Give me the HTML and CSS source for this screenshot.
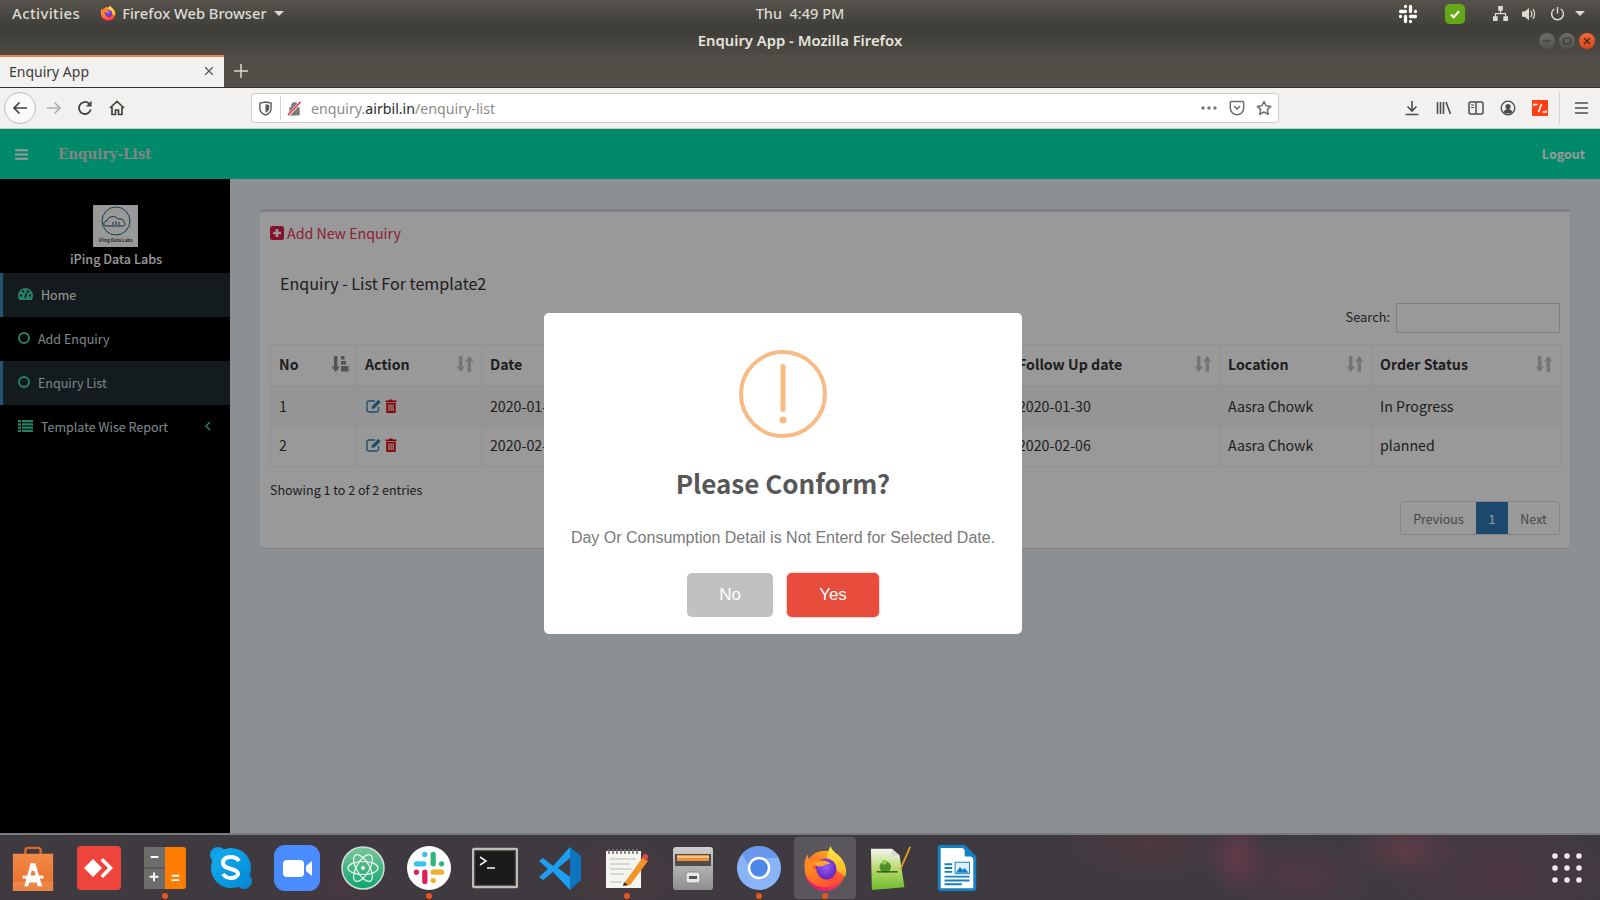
FILE: index.html
```html
<!DOCTYPE html>
<html lang="en">
<head>
<meta charset="utf-8">
<title>Enquiry App - Mozilla Firefox</title>
<link rel="stylesheet" href="styles.css">
</head>
<body>
<div class="screen">
  <svg class="defs" width="0" height="0" aria-hidden="true">
    <defs>
      <linearGradient id="ffBody" x1="0.7" y1="0" x2="0.35" y2="1"><stop offset="0" stop-color="#ffb21f"/><stop offset="0.5" stop-color="#ff5a2c"/><stop offset="1" stop-color="#e8157c"/></linearGradient>
      <linearGradient id="ffFlame" x1="0.5" y1="0" x2="0.5" y2="1"><stop offset="0" stop-color="#ffe94a"/><stop offset="1" stop-color="#ffb01f"/></linearGradient>
      <radialGradient id="ffGlobe" cx="0.5" cy="0.4" r="0.65"><stop offset="0" stop-color="#9a5cff"/><stop offset="1" stop-color="#5a1fb0"/></radialGradient>
      <linearGradient id="ffFox" x1="0" y1="0" x2="0.8" y2="1"><stop offset="0" stop-color="#ff9a1f"/><stop offset="1" stop-color="#ff4a30"/></linearGradient>
      <linearGradient id="bag" x1="0" y1="0" x2="0" y2="1"><stop offset="0" stop-color="#f28a45"/><stop offset="1" stop-color="#e96d2b"/></linearGradient>
      <linearGradient id="skypeG" x1="0" y1="0" x2="1" y2="1"><stop offset="0" stop-color="#16aef0"/><stop offset="1" stop-color="#0089d6"/></linearGradient>
      <linearGradient id="atomG" x1="0" y1="0" x2="0" y2="1"><stop offset="0" stop-color="#7cc79c"/><stop offset="1" stop-color="#0ea56d"/></linearGradient>
      <linearGradient id="cabinet" x1="0" y1="0" x2="0" y2="1"><stop offset="0" stop-color="#cfcfcf"/><stop offset="1" stop-color="#8e8e8e"/></linearGradient>
      <linearGradient id="grass" x1="0" y1="0" x2="0" y2="1"><stop offset="0" stop-color="#f4f4f0"/><stop offset="0.5" stop-color="#b7d96a"/><stop offset="1" stop-color="#6fbb2d"/></linearGradient>
      <symbol id="firefox" viewBox="0 0 48 48">
        <circle cx="24" cy="27" r="21" fill="url(#ffBody)"/>
        <path d="M30 1c1 6 8 8 12 14 4 6 5 13 3 18L26 18c0-7 1-12 4-17z" fill="url(#ffFlame)"/>
        <path d="M6 10c0 4 2 6 4 7 3-3 6-4 8-4L8 28l-5-1C2 20 3 14 6 10z" fill="#ff8a24"/>
        <circle cx="25" cy="25" r="11" fill="url(#ffGlobe)"/>
        <path d="M3 27c2 10 10 17 21 17 9 0 16-5 20-13-4 5-11 7-17 6-7-1-12-6-12-12-3 0-6-1-7-3 4-3 10-2 14-3-4-1-8-1-11 0-3 2-6 4-8 8z" fill="url(#ffFox)"/>
        <path d="M13 20c4-5 12-5 17 0-3-1-6 1-9 2-3 1-6 0-8-2z" fill="#ffa52a"/>
      </symbol>
      <symbol id="sort" viewBox="0 0 18 18">
        <path d="M3 1h3.400v10.500H9L4.700 17 .5 11.500h2.500zM13.300 1l4.200 5.500H15V17h-3.400V6.500H9z"/>
      </symbol>
      <symbol id="sortNum" viewBox="0 0 18 18">
        <path d="M3 1h3.400v10.500H9L4.700 17 .5 11.500h2.500zM10 1h3.500v3.500H10zM10 6h5v3.500h-5zM10 11h7.500v5.500H10z"/>
      </symbol>
      <symbol id="edit" viewBox="0 0 16 14">
        <path d="M12.500 8v3.200a1.800 1.800 0 0 1-1.800 1.800H2.800A1.800 1.800 0 0 1 1 11.200V3.800A1.800 1.800 0 0 1 2.800 2H9" fill="none" stroke="#2f7fb5" stroke-width="1.300"/>
        <path d="M6 7.200 12.300.8l2.400 2.400L8.400 9.600 5.500 10z" fill="#2f7fb5"/>
      </symbol>
      <symbol id="trash" viewBox="0 0 12 14">
        <path d="M4 1.500 4.700.4h2.600L8 1.500h3.500V3H.5V1.500zM1.300 3.800h9.400V13a1 1 0 0 1-1 1H2.300a1 1 0 0 1-1-1zM3.300 5.300v7h1.200v-7zM5.400 5.300v7h1.200v-7zM7.500 5.300v7h1.200v-7z" fill="#e10000" fill-rule="evenodd"/>
      </symbol>
    </defs>
  </svg>

  <header class="topbar">
    <div class="top-left">
      <span class="top-label top-activities">Activities</span>
      <span class="top-app">
        <svg class="ic16"><use href="#firefox"/></svg>
        <span class="top-label">Firefox Web Browser</span>
        <i class="caret"></i>
      </span>
    </div>
    <div class="top-clock">Thu&nbsp; 4:49 PM</div>
    <div class="top-right">
      <svg class="tray tray-slack" viewBox="0 0 20 20"><g stroke="#fff" stroke-width="3.300" stroke-linecap="round"><path d="M7.500 2.500v0M2.500 7.500h5M12.500 2.500v5M17.500 7.500v0M17.500 12.500h-5M12.500 17.500v0M7.500 17.500v-5M2.500 12.500v0"/></g></svg>
      <svg class="tray tray-check" viewBox="0 0 24 24"><path d="M7 1h10c4 0 6 2 6 6v10c0 4-2 6-6 6H7c-4 0-6-2-6-6V7c0-4 2-6 6-6z" fill="#62a915"/><path d="M7.500 12.500l3 3 6-6.500" fill="none" stroke="#fff" stroke-width="2.400"/></svg>
      <svg class="tray tray-net" viewBox="0 0 16 16"><path d="M5.500 0h5v5h-5zM0 11h5v5H0zM11 11h5v5h-5zM7.400 5h1.200v2.500H14V11h-1.200V8.700H3.200V11H2V7.500h5.400z" fill="#dedbd2"/></svg>
      <svg class="tray tray-vol" viewBox="0 0 18 16"><path d="M1 5h3l5-4v14l-5-4H1z" fill="#dedbd2"/><path d="M11 4.500c1.500 2 1.500 5 0 7M13.500 2.500c2.500 3 2.500 8 0 11" fill="none" stroke="#dedbd2" stroke-width="1.400"/></svg>
      <svg class="tray tray-pow" viewBox="0 0 16 16"><path d="M8 1v7" stroke="#dedbd2" stroke-width="1.500"/><path d="M4.500 3.200a6.300 6.300 0 1 0 7 0" fill="none" stroke="#dedbd2" stroke-width="1.500"/></svg>
      <i class="caret"></i>
    </div>
  </header>

  <div class="titlebar">
    <span class="title-text">Enquiry App - Mozilla Firefox</span>
    <div class="winbtns">
      <span class="winbtn"><svg viewBox="0 0 16 16" class="ic16"><path d="M4 8h8" stroke="#2f2f2c" stroke-width="1"/></svg></span>
      <span class="winbtn"><svg viewBox="0 0 16 16" class="ic16"><rect x="4.500" y="5" width="7" height="6" rx="1" fill="none" stroke="#2f2f2c"/></svg></span>
      <span class="winbtn winbtn-close"><svg viewBox="0 0 16 16" class="ic16"><path d="M5 5l6 6M11 5l-6 6" stroke="#3a2015" stroke-width="1.100"/></svg></span>
    </div>
  </div>

  <div class="tabrow">
    <div class="tab">
      <span class="tab-title">Enquiry App</span>
      <svg class="tab-x" viewBox="0 0 12 12"><path d="M1.500 1.500l9 9M10.500 1.500l-9 9" stroke="#55534e" stroke-width="1.400"/></svg>
    </div>
    <svg class="tab-new" viewBox="0 0 14 14"><path d="M7 0v14M0 7h14" stroke="#dcdad4" stroke-width="1.500"/></svg>
  </div>

  <div class="toolbar">
    <div class="nav">
      <span class="navbtn navbtn-back"><svg viewBox="0 0 16 16" class="ic16"><path d="M15 8H2M7.500 2.500 2 8l5.500 5.500" fill="none" stroke="#45433f" stroke-width="1.700"/></svg></span>
      <span class="navbtn navbtn-fwd"><svg viewBox="0 0 16 16" class="ic16"><path d="M1 8h13M8.500 2.500 14 8l-5.500 5.500" fill="none" stroke="#b0afab" stroke-width="1.700"/></svg></span>
      <span class="navbtn navbtn-reload"><svg viewBox="0 0 16 16" class="ic16"><path d="M13.800 9.500A6 6 0 1 1 12 3.500" fill="none" stroke="#45433f" stroke-width="1.800"/><path d="M14.500.8v5.700H8.800z" fill="#45433f"/></svg></span>
      <span class="navbtn"><svg viewBox="0 0 16 16" class="ic16"><path d="M1 8 8 1.500 15 8M3 7v7.500h3.500V10h3v4.500H13V7" fill="none" stroke="#45433f" stroke-width="1.700"/></svg></span>
    </div>
    <div class="urlbar">
      <svg class="url-shield" viewBox="0 0 14 16"><path d="M1 2.200 7 1l6 1.200V8c0 3.500-3 6-6 7-3-1-6-3.500-6-7z" fill="none" stroke="#5a5a58" stroke-width="1.500"/><path d="M7 3.500 11 4.300V8c0 2-2 3.800-4 4.600z" fill="#5a5a58"/></svg>
      <span class="url-sep"></span>
      <svg class="url-lock" viewBox="0 0 16 16"><path d="M3 7h10v8H3zM5 7V4.500a3 3 0 0 1 6 0V7" fill="#7b7b78" stroke="#7b7b78"/><path d="M1 15.500 14.500 1" stroke="#f2f2f0" stroke-width="3"/><path d="M1 15 14.500 1" stroke="#ee2a4f" stroke-width="1.500"/></svg>
      <span class="url-text">enquiry.<b class="url-domain">airbil.in</b>/enquiry-list</span>
      <span class="url-actions">
        <svg class="url-dots" viewBox="0 0 16 4"><circle cx="2" cy="2" r="1.700"/><circle cx="8" cy="2" r="1.700"/><circle cx="14" cy="2" r="1.700"/></svg>
        <svg class="url-ic" viewBox="0 0 16 16"><path d="M2.500 1.500h11a1.200 1.200 0 0 1 1.200 1.200V8a6.700 6.700 0 0 1-13.400 0V2.700a1.200 1.200 0 0 1 1.200-1.200z" fill="none" stroke="#6e6e6c" stroke-width="1.500"/><path d="M5 6l3 3 3-3" fill="none" stroke="#6e6e6c" stroke-width="1.600"/></svg>
        <svg class="url-ic" viewBox="0 0 16 16"><path d="M8 1.500l2 4.300 4.700.6-3.400 3.200.9 4.700L8 12l-4.200 2.300.9-4.700L1.300 6.400 6 5.800z" fill="none" stroke="#6e6e6c" stroke-width="1.500" stroke-linejoin="round"/></svg>
      </span>
    </div>
    <div class="tools">
      <span class="toolbtn"><svg viewBox="0 0 16 16" class="ic16"><path d="M8 1v9.500M3.500 6.500 8 11l4.500-4.500M1.500 14.500h13" fill="none" stroke="#4d4c48" stroke-width="1.600"/></svg></span>
      <span class="toolbtn"><svg viewBox="0 0 16 16" class="ic16"><path d="M1.500 2v12M4.500 2v12M7.500 2v12M10 2l4.500 12" fill="none" stroke="#4d4c48" stroke-width="1.600"/></svg></span>
      <span class="toolbtn"><svg viewBox="0 0 16 16" class="ic16"><rect x="1" y="2" width="14" height="12" rx="2" fill="none" stroke="#4d4c48" stroke-width="1.500"/><path d="M8 2.500v11" stroke="#4d4c48" stroke-width="1.500"/><path d="M3 5h3M3 7.500h3" stroke="#4d4c48"/></svg></span>
      <span class="toolbtn"><svg viewBox="0 0 16 16" class="ic16"><circle cx="8" cy="8" r="6.800" fill="none" stroke="#4d4c48" stroke-width="1.300"/><circle cx="8" cy="6.500" r="2.600" fill="#4d4c48"/><path d="M3.500 12c1-2 2.500-3 4.500-3s3.500 1 4.500 3c-2.500 2-6.500 2-9 0z" fill="#4d4c48"/></svg></span>
      <span class="toolbtn"><svg viewBox="0 0 16 16" class="ic16"><rect width="16" height="16" fill="#ff3f14"/><path d="M2 6V4.500h3.500M10.500 12h3.500V10.500M9.500 4 6.500 12" fill="none" stroke="#fff" stroke-width="1.600"/></svg></span>
      <span class="tool-sep"></span>
      <span class="toolbtn toolbtn-menu"><svg viewBox="0 0 16 16" class="ic16"><path d="M1 3h13M1 8h13M1 13h13" stroke="#4d4c48" stroke-width="1.600"/></svg></span>
    </div>
  </div>

  <div class="app">
    <div class="app-header">
      <svg class="burger" viewBox="0 0 13 11"><path d="M0 1.200h13M0 5.500h13M0 9.800h13" stroke="#fff" stroke-width="2"/></svg>
      <span class="app-title">Enquiry-List</span>
      <span class="logout">Logout</span>
    </div>
    <div class="app-body">
      <aside class="sidebar">
        <div class="brand">
          <svg class="brand-logo" viewBox="0 0 45 42">
            <rect width="45" height="42" fill="#fff"/>
            <circle cx="23" cy="16" r="14" fill="none" stroke="#1c6e7d" stroke-width="1"/>
            <path d="M13 21c-3 0-3-5 1-5 1-5 8-6 11-2 4-1 7 2 6 4 2 1 1 3-1 3z" fill="none" stroke="#26495c" stroke-width="1"/>
            <path d="M20 20v-3M23 20v-4M26 20v-3" stroke="#26495c" stroke-width="1"/>
            <text x="22.500" y="37" class="logo-text">iPing Data Labs</text>
          </svg>
          <div class="brand-name">iPing Data Labs</div>
        </div>
        <ul class="menu">
          <li class="menu-item is-active"><svg class="menu-ic" viewBox="0 0 15 12"><path d="M7.500 0a7.500 7.500 0 0 0-7.500 7.500c0 1.500.5 3 1.200 4.500h12.600c.7-1.500 1.200-3 1.200-4.500A7.500 7.500 0 0 0 7.500 0z" fill="#3fd9a6"/><circle cx="3" cy="7.500" r="1.200" fill="#222d32"/><circle cx="5" cy="3.500" r="1.200" fill="#222d32"/><circle cx="10" cy="3.500" r="1.200" fill="#222d32"/><circle cx="12" cy="7.500" r="1.200" fill="#222d32"/><path d="M7 10l1.500-5" stroke="#222d32" stroke-width="1.500"/></svg><span>Home</span></li>
          <li class="menu-item menu-sub"><i class="ring"></i><span>Add Enquiry</span></li>
          <li class="menu-item menu-sub is-active"><i class="ring"></i><span>Enquiry List</span></li>
          <li class="menu-item"><svg class="menu-ic" viewBox="0 0 15 12"><path d="M0 0h3v2.300H0zM4 0h11v2.300H4zM0 3.200h3v2.300H0zM4 3.200h11v2.300H4zM0 6.500h3v2.300H0zM4 6.500h11v2.300H4zM0 9.700h3V12H0zM4 9.700h11V12H4z" fill="#3fd9a6"/></svg><span>Template Wise Report</span><svg class="menu-chev" viewBox="0 0 6 10"><path d="M5 1 1 5l4 4" fill="none" stroke="#3fd9a6" stroke-width="1.500"/></svg></li>
        </ul>
      </aside>
      <main class="content">
        <section class="card">
          <a class="add-link"><svg class="add-ic" viewBox="0 0 14 14"><rect width="14" height="14" rx="2.500" fill="#dc1e46"/><path d="M7 3v8M3 7h8" stroke="#fff" stroke-width="2.600"/></svg>Add New Enquiry</a>
          <h2 class="card-title">Enquiry - List For template2</h2>
          <div class="search-row"><label class="search-label">Search:</label><span class="search-box"></span></div>
          <table class="grid">
            <colgroup><col class="c-no"><col class="c-action"><col class="c-date"><col class="c-hidden"><col class="c-follow"><col class="c-loc"><col class="c-status"></colgroup>
            <thead>
              <tr>
                <th>No<svg class="sort sort-on"><use href="#sortNum"/></svg></th>
                <th>Action<svg class="sort"><use href="#sort"/></svg></th>
                <th>Date<svg class="sort"><use href="#sort"/></svg></th>
                <th></th>
                <th>Follow Up date<svg class="sort"><use href="#sort"/></svg></th>
                <th>Location<svg class="sort"><use href="#sort"/></svg></th>
                <th>Order Status<svg class="sort"><use href="#sort"/></svg></th>
              </tr>
            </thead>
            <tbody>
              <tr class="odd"><td>1</td><td><svg class="act-edit"><use href="#edit"/></svg><svg class="act-trash"><use href="#trash"/></svg></td><td>2020-01-30</td><td></td><td>2020-01-30</td><td>Aasra Chowk</td><td>In Progress</td></tr>
              <tr class="even"><td>2</td><td><svg class="act-edit"><use href="#edit"/></svg><svg class="act-trash"><use href="#trash"/></svg></td><td>2020-02-06</td><td></td><td>2020-02-06</td><td>Aasra Chowk</td><td>planned</td></tr>
            </tbody>
          </table>
          <div class="table-foot">
            <div class="info">Showing 1 to 2 of 2 entries</div>
            <div class="pager"><span class="page">Previous</span><span class="page page-on">1</span><span class="page">Next</span></div>
          </div>
        </section>
      </main>
    </div>
    <div class="overlay">
      <div class="modal">
        <svg class="modal-icon" viewBox="0 0 88 88"><circle cx="44" cy="44" r="42" fill="none" stroke="#f8bb86" stroke-width="4"/><rect x="41.500" y="14" width="5" height="48" rx="2.500" fill="#f8bb86"/><circle cx="44" cy="70" r="3.600" fill="#f8bb86"/></svg>
        <h2 class="modal-title">Please Conform?</h2>
        <p class="modal-text">Day Or Consumption Detail is Not Enterd for Selected Date.</p>
        <div class="modal-btns"><button class="btn btn-no">No</button><button class="btn btn-yes">Yes</button></div>
      </div>
    </div>
  </div>

  <footer class="dock">
    <div class="dock-slot"><svg class="dock-ic dock-tall" viewBox="0 0 44 48"><path d="M14 12V6a3 3 0 0 1 3-3h10a3 3 0 0 1 3 3v6" fill="none" stroke="#d9692e" stroke-width="2.500"/><path d="M1 9h42v39H1z" fill="url(#bag)"/><path d="M1 38h42v10H1z" fill="#f09a5f" opacity=".5"/><path d="M19.500 19h5l7 24h-4.500l-1-4h-8l-1 4H13zM20.500 27l-1 5h5l-1-5z" fill="#fff" fill-rule="evenodd"/><path d="M11 32h22v3H11z" fill="#fff"/></svg></div>
    <div class="dock-slot"><svg class="dock-ic" viewBox="0 0 44 44"><rect width="44" height="44" rx="4" fill="#ef443b"/><path d="M16 13 25 22l-9 9-9-9z" fill="#fff"/><path d="M26 12l10 10-10 10-2.500-2.500L31 22l-7.500-7.500z" fill="#fff"/></svg></div>
    <div class="dock-slot dock-run"><svg class="dock-ic" viewBox="0 0 40 40"><rect x="1" y="1" width="38" height="38" rx="2" fill="#ff7d00"/><path d="M1 3a2 2 0 0 1 2-2h17v38H3a2 2 0 0 1-2-2z" fill="#6d6d6d"/><path d="M1 20h19" stroke="#4c4c4c"/><path d="M7 10h7M6 28h8M10 24v8M26 27h7M26 31h7" stroke="#fff" stroke-width="1.700"/></svg></div>
    <div class="dock-slot"><svg class="dock-ic" viewBox="0 0 44 44"><circle cx="9" cy="9" r="8" fill="#0d9ee3"/><circle cx="35" cy="35" r="8" fill="#0d87cf"/><circle cx="22" cy="22" r="20" fill="url(#skypeG)"/><path d="M30 15c-2-3-5-4-8-4-5 0-8 2-8 6 0 7 15 5 15 11 0 2-3 4-7 4-3 0-6-1-8-4" fill="none" stroke="#fff" stroke-width="4"/></svg></div>
    <div class="dock-slot"><svg class="dock-ic dock-tall" viewBox="0 0 46 46"><rect width="46" height="46" rx="11" fill="#4a8cff"/><rect x="9" y="15" width="21" height="17" rx="4" fill="#fff"/><path d="M32 21l6-5v15l-6-5z" fill="#fff"/></svg></div>
    <div class="dock-slot"><svg class="dock-ic" viewBox="0 0 44 44"><circle cx="22" cy="22" r="21" fill="url(#atomG)" stroke="#d4ded8" stroke-width="1.500"/><g fill="none" stroke="#eef7f1" stroke-width="1.200"><ellipse cx="22" cy="22" rx="15" ry="6.500"/><ellipse cx="22" cy="22" rx="15" ry="6.500" transform="rotate(60 22 22)"/><ellipse cx="22" cy="22" rx="15" ry="6.500" transform="rotate(120 22 22)"/></g><circle cx="22" cy="22" r="2" fill="#eef7f1"/></svg></div>
    <div class="dock-slot dock-run"><svg class="dock-ic" viewBox="0 0 42 42"><circle cx="21" cy="21" r="21" fill="#fff"/><g stroke-width="5" stroke-linecap="round" fill="none"><path d="M9 17h7M17 8v0" stroke="#36c5f0"/><path d="M25 8v9M33 17v0" stroke="#2eb67d"/><path d="M33 25h-8M25 33v0" stroke="#ecb22e"/><path d="M17 34v-9M9 25v0" stroke="#e01e5a"/></g></svg></div>
    <div class="dock-slot"><svg class="dock-ic dock-tall" viewBox="0 0 46 40"><rect x="1" y="1" width="44" height="38" rx="1" fill="#2a2a2a" stroke="#bdbdb8" stroke-width="2.500"/><rect x="4" y="4" width="38" height="32" fill="#1b1b1b"/><path d="M8 9l6 4-6 4" fill="none" stroke="#ececec" stroke-width="1.600"/><path d="M15 20h8" stroke="#ececec" stroke-width="1.600"/></svg></div>
    <div class="dock-slot"><svg class="dock-ic" viewBox="0 0 44 44"><path d="M31 1 42 10v24L31 44z" fill="#0e74bd"/><path d="M31 1 14 20 4 12 0 15l9 8-9 8 4 3 10-8 17 18V31L19 22 31 12z" fill="#1c9ff0"/></svg></div>
    <div class="dock-slot dock-run"><svg class="dock-ic" viewBox="0 0 44 44"><rect x="1" y="5" width="35" height="37" fill="#f5f5f0"/><path d="M4 3v5M8 3v5M12 3v5M16 3v5M20 3v5M24 3v5M28 3v5M32 3v5" stroke="#6f6f6f" stroke-width="1.600"/><path d="M5 13h26M5 18h20M5 23h22M5 28h14M5 36h12" stroke="#b8b8b8"/><path d="M20 36 38 11l5 4-18 24-6 1z" fill="#f39325"/><path d="M37 11l2-3c2-1 5 2 4 4l-2 3z" fill="#e04b4b"/><path d="M19 36l-1 4 5-1z" fill="#333"/></svg></div>
    <div class="dock-slot"><svg class="dock-ic" viewBox="0 0 42 44"><path d="M1 4a3 3 0 0 1 3-3h34a3 3 0 0 1 3 3v37a3 3 0 0 1-3 3H4a3 3 0 0 1-3-3z" fill="url(#cabinet)"/><path d="M3 8h36v12H3z" fill="#4d4d4d"/><path d="M5 9h32v6H5z" fill="#f08f35"/><path d="M5 11h32" stroke="#fff4e0"/><rect x="14" y="26" width="14" height="11" rx="2" fill="#e6e6e6" stroke="#8a8a8a"/><rect x="17" y="30" width="8" height="3" fill="#555"/></svg></div>
    <div class="dock-slot dock-run"><svg class="dock-ic" viewBox="0 0 44 44"><circle cx="22" cy="22" r="22" fill="#8ab4f8"/><path d="M22 0a22 22 0 0 0-17 8l10 17 7-13h20A22 22 0 0 0 22 0z" fill="#5f8fe8" opacity=".75"/><circle cx="22" cy="22" r="10" fill="#4f86ec" stroke="#fff" stroke-width="2.500"/></svg></div>
    <div class="dock-slot dock-run dock-active"><svg class="dock-ic dock-ff"><use href="#firefox"/></svg></div>
    <div class="dock-slot"><svg class="dock-ic" viewBox="0 0 44 46"><path d="M1 3h22l8 7 5 33-34 3z" fill="url(#grass)"/><path d="M23 3v7h8" fill="#d8d8d8"/><path d="M32 24 42 1" stroke="#e3a51e" stroke-width="1.800"/><circle cx="16" cy="22" r="6" fill="#4f8f2a"/><circle cx="15" cy="17" r="2.500" fill="#8fce4a"/><path d="M7 27h22" stroke="#2f5f18" stroke-width="1.500"/></svg></div>
    <div class="dock-slot"><svg class="dock-ic dock-tall" viewBox="0 0 40 48"><path d="M2 0h26l12 12v33a3 3 0 0 1-3 3H3a3 3 0 0 1-3-3V2a2 2 0 0 1 2-2z" fill="#1480c4"/><path d="M3 3h23l11 11v31H3z" fill="#fff"/><path d="M28 0l12 12H28z" fill="#1480c4"/><path d="M7 20h8M7 24h8M7 28h8M7 33h26M7 37h26M7 41h18" stroke="#1480c4" stroke-width="2"/><rect x="18" y="18" width="15" height="12" fill="#dff0fa" stroke="#1480c4"/><path d="M19 29l4-6 3 3 2-2 4 5z" fill="#1480c4"/></svg></div>
    <svg class="dock-grid" viewBox="0 0 30 30"><g fill="#ecebeb"><circle cx="3" cy="3" r="2.800"/><circle cx="15" cy="3" r="2.800"/><circle cx="27" cy="3" r="2.800"/><circle cx="3" cy="15" r="2.800"/><circle cx="15" cy="15" r="2.800"/><circle cx="27" cy="15" r="2.800"/><circle cx="3" cy="27" r="2.800"/><circle cx="15" cy="27" r="2.800"/><circle cx="27" cy="27" r="2.800"/></g></svg>
  </footer>
</div>
</body>
</html>
```
FILE: styles.css
```css
* { box-sizing: border-box; }
html, body { margin: 0; padding: 0; }
body { font-family: "Noto Sans CJK SC", "Noto Sans", sans-serif; overflow: hidden; background: #000; }
.screen { width: 1600px; height: 900px; display: flex; flex-direction: column; overflow: hidden; }
.defs { position: absolute; }
.ic16 { width: 16px; height: 16px; display: block; }

/* GNOME top bar */
.topbar { height: 27px; flex: none; display: grid; grid-template-columns: 1fr auto 1fr; align-items: center; background: linear-gradient(#56534c, #3f3e39); color: #dedbd2; font-family: "Noto Sans", sans-serif; font-size: 15px; font-weight: 500; }
.top-left { display: flex; align-items: center; padding: 0 0 1px 12px; }
.top-label { white-space: nowrap; font-size: 14.700px; }
.top-activities { font-size: 15px; letter-spacing: .35px; }
.top-app { display: flex; align-items: center; margin-left: 20px; gap: 6px; }
.caret { display: block; width: 0; height: 0; border-left: 5px solid transparent; border-right: 5px solid transparent; border-top: 5px solid #dedbd2; }
.top-app .caret { margin-left: 1px; }
.top-clock { white-space: nowrap; font-size: 14.500px; padding-bottom: 1px; }
.top-right { display: flex; align-items: center; justify-content: flex-end; padding-right: 15px; }
.tray { display: block; }
.tray-slack { width: 20px; height: 20px; margin-right: 26px; }
.tray-check { width: 22px; height: 22px; margin-right: 27px; }
.tray-net { width: 15px; height: 15px; margin-right: 13px; }
.tray-vol { width: 16px; height: 14px; margin-right: 13px; }
.tray-pow { width: 15px; height: 15px; margin-right: 10px; }

.titlebar { height: 28px; flex: none; display: flex; align-items: center; justify-content: center; position: relative; padding-bottom: 2px; background: linear-gradient(#3d3c37, #4d4b44); color: #e6e4dd; font-family: "Noto Sans", sans-serif; font-size: 14.800px; font-weight: 600; }
.title-text { white-space: nowrap; }
.winbtns { position: absolute; right: 5px; top: 6px; display: flex; gap: 4px; }
.winbtn { width: 16px; height: 16px; border-radius: 50%; background: linear-gradient(#706e68, #53514b); }
.winbtn-close { background: linear-gradient(#f0693a, #d9471a); }

.tabrow { height: 33px; flex: none; display: flex; align-items: flex-end; background: #504e47; border-bottom: 1px solid #33322e; }
.tab { width: 224px; height: 32px; display: flex; align-items: center; justify-content: space-between; padding: 0 10px 2px 9px; background: #f2f1ef; border-top: 2px solid #f08050; color: #3d3c39; font-family: "Noto Sans", sans-serif; font-size: 14px; }
.tab-title { white-space: nowrap; }
.tab-x { width: 10px; height: 10px; display: block; }
.tab-new { width: 14px; height: 14px; margin: 0 0 9px 10px; display: block; }

/* Firefox toolbar */
.toolbar { height: 41px; flex: none; display: flex; align-items: center; background: #f2f1ef; border-bottom: 1px solid #c9c8c4; }
.nav { width: 251px; flex: none; display: flex; align-items: center; padding-left: 4px; }
.navbtn { width: 32px; height: 32px; display: flex; align-items: center; justify-content: center; }
.navbtn-back { border: 1px solid #bdbcb8; border-radius: 50%; background: #fbfbfa; }
.navbtn-fwd { margin-left: 2px; }
.navbtn-reload { margin-left: -1px; }
.urlbar { width: 1028px; height: 30px; flex: none; display: flex; align-items: center; background: #fff; border: 1px solid #cfcecb; border-radius: 4px; font-family: "Noto Sans", sans-serif; }
.url-shield { width: 13px; height: 15px; margin-left: 7px; }
.url-sep { width: 1px; height: 24px; background: #d5d4d1; margin-left: 8px; }
.url-lock { width: 15px; height: 15px; margin-left: 6px; }
.url-text { margin-left: 9px; font-size: 14.200px; color: #8b8b88; white-space: nowrap; }
.url-domain { color: #2a2a28; font-weight: 400; }
.url-actions { margin-left: auto; display: flex; align-items: center; }
.url-dots { width: 16px; height: 4px; fill: #777; margin-right: 7px; }
.url-ic { width: 16px; height: 16px; margin-right: 6px; margin-left: 5px; }
.tools { flex: 1; display: flex; align-items: center; padding-left: 117px; }
.toolbtn { width: 32px; height: 32px; display: flex; align-items: center; justify-content: center; flex: none; }
.tool-sep { width: 1px; height: 32px; background: #d5d4d1; margin: 0 6px 0 3px; }
.toolbtn-menu { margin-left: 0; }

/* App */
.app { height: 706px; flex: none; position: relative; display: flex; flex-direction: column; background: #ecf0f5; border-bottom: 2px solid #7b7c7f; }
.app-header { height: 50px; flex: none; display: flex; align-items: center; background: #00e6af; color: #fff; padding: 0 15px 0 15px; }
.burger { width: 13px; height: 11px; display: block; }
.app-title { margin-left: 30px; font-family: "DejaVu Serif", serif; font-weight: 700; font-stretch: condensed; font-size: 15px; color: #dcdcdc; white-space: nowrap; }
.logout { margin-left: auto; padding-bottom: 2px; font-size: 12.500px; font-weight: 700; color: #fff; }
.app-body { flex: 1; display: flex; min-height: 0; }
.sidebar { width: 230px; flex: none; background: #000; }
.brand { height: 94px; padding-top: 26px; text-align: center; }
.brand-logo { width: 45px; height: 42px; display: block; margin: 0 auto 2px 93px; }
.logo-text { font-size: 4.500px; text-anchor: middle; fill: #444; font-weight: 700; }
.brand-name { font-size: 12.600px; font-weight: 500; line-height: 20px; color: #fff; margin-left: 2px; }
.menu { list-style: none; margin: 0; padding: 0; }
.menu-item { height: 44px; display: flex; align-items: center; padding-left: 18px; padding-bottom: 2px; font-size: 12.500px; color: #d2e0e0; border-left: 0 solid #3c8dbc; }
.menu-item.is-active { background: #222d32; border-left-width: 3px; padding-left: 15px; color: #fff; }
.menu-sub.menu-sub { color: #d2e0e0; }
.menu-ic { width: 15px; height: 12px; display: block; margin-right: 8px; flex: none; }
.ring { display: block; width: 12px; height: 12px; border: 2px solid #3fd9a6; border-radius: 50%; margin-right: 8px; flex: none; }
.menu-chev { width: 6px; height: 10px; margin-left: auto; margin-right: 19px; display: block; }
.content { flex: 1; padding: 30px 30px 0; min-width: 0; }
.card { height: 339px; background: #fff; border-top: 3px solid #d2d6de; border-radius: 3px; padding: 0 10px; color: #333; box-shadow: 0 1px 1px rgba(0,0,0,.1); }
.add-link { display: flex; align-items: center; height: 20px; padding-top: 11px; font-size: 14.200px; color: #e9345a; box-sizing: content-box; }
.add-ic { width: 14px; height: 14px; margin-right: 3px; display: block; }
.card-title { margin: 28px 0 0 10px; font-size: 16.100px; font-weight: 400; line-height: 24px; color: #333; }
.search-row { display: flex; justify-content: flex-end; align-items: center; height: 30px; margin-top: 8px; font-size: 12.800px; }
.search-label { margin-right: 6px; position: relative; top: -2px; }
.search-box { width: 164px; height: 30px; border: 1px solid #d2d6de; background: #fff; }
.grid { width: 1290px; margin-top: 11px; border-collapse: collapse; table-layout: fixed; font-size: 14.200px; }
.c-no { width: 86px; } .c-action { width: 125px; } .c-date { width: 120px; } .c-hidden { width: 408px; }
.c-follow { width: 210px; } .c-loc { width: 152px; } .c-status { width: 189px; }
.grid th, .grid td { border: 1px solid #f4f4f4; padding: 0 8px; text-align: left; position: relative; white-space: nowrap; }
.grid th { height: 41px; border-bottom-width: 2px; font-weight: 700; color: #333; padding-bottom: 1px; }
.grid td { height: 39px; }
.grid .odd td { height: 42px; background: #f9f9f9; padding-bottom: 1px; }
.grid .even td { padding-bottom: 5px; }
.sort { position: absolute; right: 7px; top: 10px; width: 18px; height: 18px; fill: #c4c4c4; }
.sort-on { fill: #8c8c8c; }
.act-edit { width: 16px; height: 14px; vertical-align: -1px; margin: 0 3px 0 1px; }
.act-trash { width: 12px; height: 14px; vertical-align: -1px; }
.table-foot { display: flex; justify-content: space-between; align-items: flex-start; }
.info { padding-top: 13px; font-size: 12.500px; line-height: 20px; color: #333; }
.pager { margin-top: 34px; display: flex; height: 34px; width: 160px; border: 1px solid #ddd; border-radius: 4px; font-size: 12.500px; color: #777; overflow: hidden; }
.page { display: flex; align-items: center; justify-content: center; padding: 0 12px; background: #fff; }
.page:first-child { flex: 1; }
.page-on { width: 32px; flex: none; padding: 0; background: #337ab7; color: #fff; }
.page:last-child { width: 51px; padding: 0; }

/* Modal */
.overlay { position: absolute; inset: 0; background: rgba(0,0,0,.4); padding: 184px 0 0 544px; }
.modal { width: 478px; height: 321px; background: #fff; border-radius: 5px; display: flex; flex-direction: column; align-items: center; padding-top: 37px; }
.modal-icon { width: 88px; height: 88px; display: block; flex: none; }
.modal-title { margin: 25px 0 0; font-size: 26px; font-weight: 700; line-height: 40px; color: #575757; }
.modal-text { margin: 23px 0 0; font-family: "Liberation Sans", sans-serif; font-size: 16px; line-height: 24px; color: #797979; white-space: nowrap; }
.modal-btns { display: flex; gap: 14px; margin-top: 23px; }
.btn { height: 44px; border: 0; border-radius: 5px; color: #fff; font-family: "Liberation Sans", sans-serif; font-size: 17px; padding: 0; }
.btn-no { width: 86px; background: #c1c1c1; }
.btn-yes { width: 92px; background: #e74c3c; box-shadow: 0 0 2px rgba(231,76,60,.8); }

/* Dock */
.dock { height: 65px; flex: none; display: flex; align-items: center; background:
  radial-gradient(ellipse 32px 38px at 1237px 22px, #643a4a, transparent),
  radial-gradient(ellipse 60px 32px at 1405px 15px, #5c3c48, transparent),
  radial-gradient(ellipse 80px 40px at 1300px 40px, #4f3843, transparent),
  radial-gradient(ellipse 90px 40px at 1150px 10px, #4c3840, transparent),
  radial-gradient(ellipse 120px 60px at 1500px 40px, #4b3642, transparent),
  radial-gradient(ellipse 60px 40px at 340px 50px, #463740, transparent),
  radial-gradient(ellipse 60px 40px at 620px 40px, #4c3a40, transparent),
  #3e3a40; }
.dock-slot { width: 66px; height: 65px; flex: none; display: flex; align-items: center; justify-content: center; position: relative; }
.dock-ic { width: 44px; height: 44px; display: block; }
.dock-tall { width: 46px; height: 46px; }
.dock-run::after { content: ""; position: absolute; left: 50%; bottom: 1px; width: 6px; height: 6px; margin-left: -3px; border-radius: 50%; background: #e95420; }
.dock-active::before { content: ""; position: absolute; left: 2px; right: 2px; top: 2px; bottom: 1px; border-radius: 4px; background: rgba(255,255,255,.15); }
.dock-ff { position: relative; width: 46px; height: 46px; }
.dock-grid { width: 30px; height: 30px; margin-left: auto; margin-right: 18px; display: block; }
```
